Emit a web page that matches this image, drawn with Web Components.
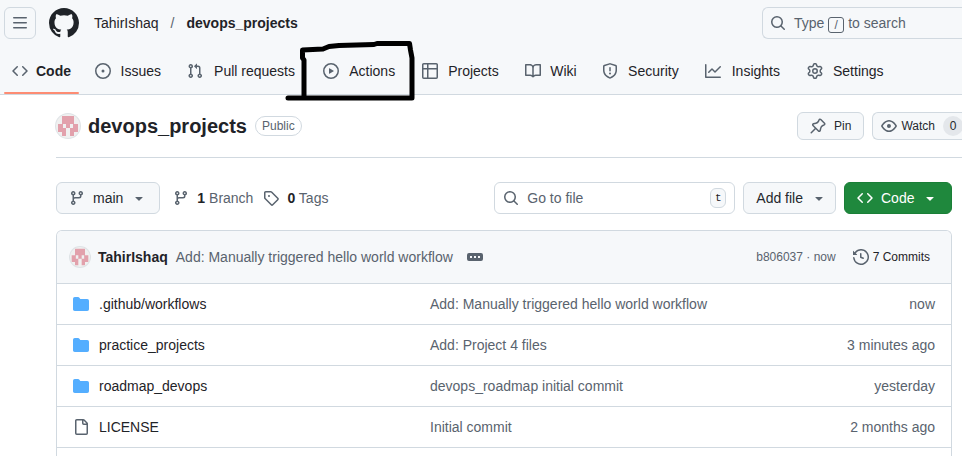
<!DOCTYPE html>
<html lang="en">
<head>
<meta charset="utf-8">
<title>TahirIshaq/devops_projects</title>
<style>
  html { overflow: hidden; }
  body {
    margin: 0;
    background: #fff;
    color: #1f2328;
    font: 14px/20px "Liberation Sans", Arial, sans-serif;
    --muted: #59636e;
    --line: #d1d9e0;
    --subtle: #f6f8fa;
  }
</style>
</head>
<body>
<repo-page></repo-page>
<script>
const base = `
  * { box-sizing: border-box; }
  a { color: inherit; text-decoration: none; }
  button, input { font: inherit; color: inherit; margin: 0; }
  button { cursor: pointer; }
`;

const icons = {
  menu: '<path d="M1 2.75A.75.75 0 0 1 1.75 2h12.5a.75.75 0 0 1 0 1.5H1.75A.75.75 0 0 1 1 2.75Zm0 5A.75.75 0 0 1 1.75 7h12.5a.75.75 0 0 1 0 1.5H1.75A.75.75 0 0 1 1 7.75ZM1.75 12h12.5a.75.75 0 0 1 0 1.5H1.75a.75.75 0 0 1 0-1.5Z"/>',
  github: '<path d="M8 0c4.42 0 8 3.58 8 8a8.013 8.013 0 0 1-5.45 7.59c-.4.08-.55-.17-.55-.38 0-.27.01-1.13.01-2.2 0-.75-.25-1.23-.54-1.48 1.78-.2 3.65-.88 3.65-3.95 0-.88-.31-1.59-.82-2.15.08-.2.36-1.02-.08-2.12 0 0-.67-.22-2.2.82-.64-.18-1.32-.27-2-.27-.68 0-1.36.09-2 .27-1.53-1.03-2.2-.82-2.2-.82-.44 1.1-.16 1.92-.08 2.12-.51.56-.82 1.28-.82 2.15 0 3.06 1.86 3.75 3.64 3.95-.23.2-.44.55-.51 1.07-.46.21-1.61.55-2.33-.66-.15-.24-.6-.83-1.23-.82-.67.01-.27.38.01.53.34.19.73.9.82 1.13.16.45.68 1.31 2.69.94 0 .67.01 1.3.01 1.49 0 .21-.15.45-.55.38A7.995 7.995 0 0 1 0 8c0-4.42 3.58-8 8-8Z"/>',
  code: '<path d="m11.28 3.22 4.25 4.25a.75.75 0 0 1 0 1.06l-4.25 4.25a.749.749 0 0 1-1.275-.326.749.749 0 0 1 .215-.734L13.94 8l-3.72-3.72a.749.749 0 0 1 .326-1.275.749.749 0 0 1 .734.215Zm-6.56 0a.751.751 0 0 1 1.042.018.751.751 0 0 1 .018 1.042L2.06 8l3.72 3.72a.749.749 0 0 1-.326 1.275.749.749 0 0 1-.734-.215L.47 8.53a.75.75 0 0 1 0-1.06Z"/>',
  issue: '<path d="M8 9.5a1.5 1.5 0 1 0 0-3 1.5 1.5 0 0 0 0 3Z"/><path d="M8 0a8 8 0 1 1 0 16A8 8 0 0 1 8 0ZM1.5 8a6.5 6.5 0 1 0 13 0 6.5 6.5 0 0 0-13 0Z"/>',
  pull: '<path d="M1.5 3.25a2.25 2.25 0 1 1 3 2.122v5.256a2.251 2.251 0 1 1-1.5 0V5.372A2.25 2.25 0 0 1 1.5 3.25Zm5.677-.177L9.573.677A.25.25 0 0 1 10 .854V2.5h1A2.5 2.5 0 0 1 13.5 5v5.628a2.251 2.251 0 1 1-1.5 0V5a1 1 0 0 0-1-1h-1v1.646a.25.25 0 0 1-.427.177L7.177 3.427a.25.25 0 0 1 0-.354ZM3.75 2.5a.75.75 0 1 0 0 1.5.75.75 0 0 0 0-1.5Zm0 9.5a.75.75 0 1 0 0 1.5.75.75 0 0 0 0-1.5Zm8.25.75a.75.75 0 1 0 1.5 0 .75.75 0 0 0-1.5 0Z"/>',
  play: '<path d="M8 0a8 8 0 1 1 0 16A8 8 0 0 1 8 0ZM1.5 8a6.5 6.5 0 1 0 13 0 6.5 6.5 0 0 0-13 0Zm4.879-2.773 4.264 2.559a.25.25 0 0 1 0 .428l-4.264 2.559A.25.25 0 0 1 6 10.559V5.442a.25.25 0 0 1 .379-.215Z"/>',
  table: '<path d="M0 1.75C0 .784.784 0 1.75 0h12.5C15.216 0 16 .784 16 1.75v12.5A1.75 1.75 0 0 1 14.25 16H1.75A1.75 1.75 0 0 1 0 14.25ZM6.5 6.5v8h7.75a.25.25 0 0 0 .25-.25V6.5Zm8-1.5V1.75a.25.25 0 0 0-.25-.25H6.5V5Zm-13 1.5v7.75c0 .138.112.25.25.25H5v-8ZM5 5V1.5H1.75a.25.25 0 0 0-.25.25V5Z"/>',
  book: '<path d="M0 1.75A.75.75 0 0 1 .75 1h4.253c1.227 0 2.317.59 3 1.501A3.743 3.743 0 0 1 11.006 1h4.245a.75.75 0 0 1 .75.75v10.5a.75.75 0 0 1-.75.75h-4.507a2.25 2.25 0 0 0-1.591.659l-.622.621a.75.75 0 0 1-1.06 0l-.622-.621A2.25 2.25 0 0 0 5.258 13H.75a.75.75 0 0 1-.75-.75Zm7.251 10.324.004-5.073-.002-2.253A2.25 2.25 0 0 0 5.003 2.5H1.5v9h3.757a3.75 3.75 0 0 1 1.994.574ZM8.755 4.75l-.004 7.322a3.752 3.752 0 0 1 1.992-.572H14.5v-9h-3.495a2.25 2.25 0 0 0-2.25 2.25Z"/>',
  shield: '<path d="M7.467.133a1.748 1.748 0 0 1 1.066 0l5.25 1.68A1.75 1.75 0 0 1 15 3.48V7c0 1.566-.32 3.182-1.303 4.682-.983 1.498-2.585 2.813-5.032 3.855a1.697 1.697 0 0 1-1.33 0c-2.447-1.042-4.049-2.357-5.032-3.855C1.32 10.182 1 8.566 1 7V3.48a1.75 1.75 0 0 1 1.217-1.667Zm.61 1.429a.25.25 0 0 0-.153 0l-5.25 1.68a.25.25 0 0 0-.174.238V7c0 1.358.275 2.666 1.057 3.86.784 1.194 2.121 2.34 4.366 3.297a.196.196 0 0 0 .154 0c2.245-.956 3.582-2.104 4.366-3.298C13.225 9.666 13.5 8.36 13.5 7V3.48a.251.251 0 0 0-.174-.237l-5.25-1.68ZM8.75 4.75v3a.75.75 0 0 1-1.5 0v-3a.75.75 0 0 1 1.5 0ZM9 10.5a1 1 0 1 1-2 0 1 1 0 0 1 2 0Z"/>',
  graph: '<path d="M1.5 1.75V13.5h13.75a.75.75 0 0 1 0 1.5H.75a.75.75 0 0 1-.75-.75V1.75a.75.75 0 0 1 1.5 0Zm14.28 2.53-5.25 5.25a.75.75 0 0 1-1.06 0L7 7.06 4.28 9.78a.751.751 0 0 1-1.042-.018.751.751 0 0 1-.018-1.042l3.25-3.25a.75.75 0 0 1 1.06 0L10 7.94l4.72-4.72a.751.751 0 0 1 1.042.018.751.751 0 0 1 .018 1.042Z"/>',
  gear: '<path d="M8 0a8.2 8.2 0 0 1 .701.031C9.444.095 9.99.645 10.16 1.29l.288 1.107c.018.066.079.158.212.224.231.114.454.243.668.386.123.082.233.09.299.071l1.103-.303c.644-.176 1.392.021 1.82.63.27.385.506.792.704 1.218.315.675.111 1.422-.364 1.891l-.814.806c-.049.048-.098.147-.088.294.016.257.016.515 0 .772-.01.147.038.246.088.294l.814.806c.475.469.679 1.216.364 1.891a7.977 7.977 0 0 1-.704 1.217c-.428.61-1.176.807-1.82.63l-1.102-.302c-.067-.019-.177-.011-.3.071a5.909 5.909 0 0 1-.668.386c-.133.066-.194.158-.211.224l-.29 1.106c-.168.646-.715 1.196-1.458 1.26a8.006 8.006 0 0 1-1.402 0c-.743-.064-1.289-.614-1.458-1.26l-.289-1.106c-.018-.066-.079-.158-.212-.224a5.738 5.738 0 0 1-.668-.386c-.123-.082-.233-.09-.299-.071l-1.103.303c-.644.176-1.392-.021-1.82-.63a8.12 8.12 0 0 1-.704-1.218c-.315-.675-.111-1.422.363-1.891l.815-.806c.05-.048.098-.147.088-.294a6.214 6.214 0 0 1 0-.772c.01-.147-.038-.246-.088-.294l-.815-.806C.635 6.045.431 5.298.746 4.623a7.92 7.92 0 0 1 .704-1.217c.428-.61 1.176-.807 1.82-.63l1.102.302c.067.019.177.011.3-.071.214-.143.437-.272.668-.386.133-.066.194-.158.211-.224l.29-1.106C6.009.645 6.556.095 7.299.03 7.53.01 7.764 0 8 0Zm-.571 1.525c-.036.003-.108.036-.137.146l-.289 1.105c-.147.561-.549.967-.998 1.189-.173.086-.34.183-.5.29-.417.278-.97.423-1.529.27l-1.103-.303c-.109-.03-.175.016-.195.045-.22.312-.412.644-.573.99-.014.031-.021.11.059.19l.815.806c.411.406.562.957.53 1.456a4.709 4.709 0 0 0 0 .582c.032.499-.119 1.05-.53 1.456l-.815.806c-.081.08-.073.159-.059.19.162.346.353.677.573.989.02.03.085.076.195.046l1.102-.303c.56-.153 1.113-.008 1.53.27.161.107.328.204.501.29.447.222.85.629.997 1.189l.289 1.105c.029.109.101.143.137.146a6.6 6.6 0 0 0 1.142 0c.036-.003.108-.036.137-.146l.289-1.105c.147-.561.549-.967.998-1.189.173-.086.34-.183.5-.29.417-.278.97-.423 1.529-.27l1.103.303c.109.029.175-.016.195-.045.22-.313.411-.644.573-.99.014-.031.021-.11-.059-.19l-.815-.806c-.411-.406-.562-.957-.53-1.456a4.709 4.709 0 0 0 0-.582c-.032-.499.119-1.05.53-1.456l.815-.806c.081-.08.073-.159.059-.19a6.464 6.464 0 0 0-.573-.989c-.02-.03-.085-.076-.195-.046l-1.102.303c-.56.153-1.113.008-1.53-.27a4.44 4.44 0 0 0-.501-.29c-.447-.222-.85-.629-.997-1.189l-.289-1.105c-.029-.11-.101-.143-.137-.146a6.6 6.6 0 0 0-1.142 0ZM11 8a3 3 0 1 1-6 0 3 3 0 0 1 6 0ZM9.5 8a1.5 1.5 0 1 0-3.001.001A1.5 1.5 0 0 0 9.5 8Z"/>',
  search: '<path d="M10.68 11.74a6 6 0 0 1-7.922-8.982 6 6 0 0 1 8.982 7.922l3.04 3.04a.749.749 0 0 1-.326 1.275.749.749 0 0 1-.734-.215ZM11.5 7a4.499 4.499 0 1 0-8.997 0A4.499 4.499 0 0 0 11.5 7Z"/>',
  pin: '<path d="m11.294.984 3.722 3.722a1.75 1.75 0 0 1-.504 2.826l-1.327.613a3.089 3.089 0 0 0-1.707 2.084l-.584 2.454c-.317 1.332-1.972 1.8-2.94.832L5.75 11.311 1.78 15.28a.749.749 0 1 1-1.06-1.06l3.969-3.97-2.204-2.204c-.968-.968-.5-2.623.832-2.94l2.454-.584a3.08 3.08 0 0 0 2.084-1.707l.613-1.327a1.75 1.75 0 0 1 2.826-.504ZM6.283 9.723l2.732 2.731a.25.25 0 0 0 .42-.119l.584-2.454a4.586 4.586 0 0 1 2.537-3.098l1.328-.613a.25.25 0 0 0 .072-.404l-3.722-3.722a.25.25 0 0 0-.404.072l-.613 1.328a4.584 4.584 0 0 1-3.098 2.537l-2.454.584a.25.25 0 0 0-.119.42l2.731 2.732Z"/>',
  eye: '<path d="M8 2c1.981 0 3.671.992 4.933 2.078 1.27 1.091 2.187 2.345 2.637 3.023a1.62 1.62 0 0 1 0 1.798c-.45.678-1.367 1.932-2.637 3.023C11.67 13.008 9.981 14 8 14c-1.981 0-3.671-.992-4.933-2.078C1.797 10.83.88 9.576.43 8.898a1.62 1.62 0 0 1 0-1.798c.45-.677 1.367-1.931 2.637-3.022C4.33 2.992 6.019 2 8 2ZM1.679 7.932a.12.12 0 0 0 0 .136c.411.622 1.241 1.75 2.366 2.717C5.176 11.758 6.527 12.5 8 12.5c1.473 0 2.825-.742 3.955-1.715 1.124-.967 1.954-2.096 2.366-2.717a.12.12 0 0 0 0-.136c-.412-.621-1.242-1.75-2.366-2.717C10.824 4.242 9.473 3.5 8 3.5c-1.473 0-2.825.742-3.955 1.715-1.124.967-1.954 2.096-2.366 2.717ZM8 10a2 2 0 1 1-.001-3.999A2 2 0 0 1 8 10Z"/>',
  branch: '<path d="M9.5 3.25a2.25 2.25 0 1 1 3 2.122V6A2.5 2.5 0 0 1 10 8.5H6a1 1 0 0 0-1 1v1.128a2.251 2.251 0 1 1-1.5 0V5.372a2.25 2.25 0 1 1 1.5 0v1.836A2.493 2.493 0 0 1 6 7h4a1 1 0 0 0 1-1v-.628A2.25 2.25 0 0 1 9.5 3.25Zm-6 0a.75.75 0 1 0 1.5 0 .75.75 0 0 0-1.5 0Zm8.25-.75a.75.75 0 1 0 0 1.5.75.75 0 0 0 0-1.5ZM4.25 12a.75.75 0 1 0 0 1.5.75.75 0 0 0 0-1.5Z"/>',
  tag: '<path d="M1 7.775V2.75C1 1.784 1.784 1 2.75 1h5.025c.464 0 .91.184 1.238.513l6.25 6.25a1.75 1.75 0 0 1 0 2.474l-5.026 5.026a1.75 1.75 0 0 1-2.474 0l-6.25-6.25A1.752 1.752 0 0 1 1 7.775Zm1.5 0c0 .066.026.13.073.177l6.25 6.25a.25.25 0 0 0 .354 0l5.025-5.025a.25.25 0 0 0 0-.354l-6.25-6.25a.25.25 0 0 0-.177-.073H2.75a.25.25 0 0 0-.25.25ZM6 5a1 1 0 1 1 0 2 1 1 0 0 1 0-2Z"/>',
  caret: '<path d="m4.427 7.427 3.396 3.396a.25.25 0 0 0 .354 0l3.396-3.396A.25.25 0 0 0 11.396 7H4.604a.25.25 0 0 0-.177.427Z"/>',
  history: '<path d="m.427 1.927 1.215 1.215a8.002 8.002 0 1 1-1.6 5.685.75.75 0 1 1 1.493-.154 6.5 6.5 0 1 0 1.18-4.458l1.358 1.358A.25.25 0 0 1 3.896 6H.25A.25.25 0 0 1 0 5.75V2.104a.25.25 0 0 1 .427-.177ZM7.75 4a.75.75 0 0 1 .75.75v2.992l2.028.812a.75.75 0 0 1-.557 1.392l-2.5-1A.751.751 0 0 1 7 8.25v-3.5A.75.75 0 0 1 7.75 4Z"/>',
  folder: '<path d="M1.75 1A1.75 1.75 0 0 0 0 2.75v10.5C0 14.216.784 15 1.75 15h12.5A1.75 1.75 0 0 0 16 13.25v-8.5A1.75 1.75 0 0 0 14.25 3H7.5a.25.25 0 0 1-.2-.1l-.9-1.2C6.07 1.26 5.55 1 5 1H1.75Z"/>',
  file: '<path d="M2 1.75C2 .784 2.784 0 3.75 0h6.586c.464 0 .909.184 1.237.513l2.914 2.914c.329.328.513.773.513 1.237v9.586A1.75 1.75 0 0 1 13.25 16h-9.5A1.75 1.75 0 0 1 2 14.25Zm1.75-.25a.25.25 0 0 0-.25.25v12.5c0 .138.112.25.25.25h9.5a.25.25 0 0 0 .25-.25V6h-2.75A1.75 1.75 0 0 1 9 4.25V1.5Zm6.75.062V4.25c0 .138.112.25.25.25h2.688l-.011-.013-2.914-2.914-.013-.011Z"/>',
  ellipsis: '<path fill-rule="evenodd" d="M2 4h12a2 2 0 0 1 2 2v4a2 2 0 0 1-2 2H2a2 2 0 0 1-2-2V6a2 2 0 0 1 2-2Zm1 3v2h2V7Zm4 0v2h2V7Zm4 0v2h2V7Z"/>',
};

function define(name, render) {
  customElements.define(name, class extends HTMLElement {
    connectedCallback() {
      if (this.shadowRoot) return;
      const t = document.createElement('template');
      t.innerHTML = render(this);
      this.attachShadow({ mode: 'open' }).append(t.content.cloneNode(true));
    }
  });
}

define('oct-icon', el => `
  <style>
    :host { display: block; flex: none; width: 16px; height: 16px; color: var(--icon, var(--muted)); }
    svg { display: block; width: 100%; height: 100%; fill: currentColor; }
  </style>
  <svg viewBox="0 0 16 16" aria-hidden="true">${icons[el.getAttribute('name')]}</svg>`);

define('user-avatar', () => `
  <style>
    :host { display: block; flex: none; width: 24px; height: 24px; border-radius: 50%; overflow: hidden; background: #f0f0f0; box-shadow: 0 0 0 1px #dfe3e6; }
    svg { display: block; width: 100%; height: 100%; fill: #e2a1ac; }
  </style>
  <svg viewBox="0 0 24 24" role="img" aria-label="TahirIshaq"><path d="M6 2h12v8h4v8h-4v4h-4v-8h-4v8H6v-4H2v-8h4Z"/><path fill="#f0f0f0" d="M7 10h3v4H7Zm7 0h3v4h-3Z"/></svg>`);

define('nav-tab', el => `
  <style>${base}
    :host { display: block; position: relative; }
    a { display: flex; align-items: center; gap: 8px; padding: 5px 8px; height: 30px; }
    .label { display: inline-flex; flex-direction: column; align-items: center; white-space: nowrap; }
    .label::after { content: attr(data-label); height: 0; overflow: hidden; visibility: hidden; font-weight: 700; }
    :host([selected]) .name { font-weight: 700; }
    :host([selected])::after { content: ""; position: absolute; inset: auto 0 -8px 0; height: 2px; border-radius: 6px; background: #fd8c73; }
  </style>
  <a href="#"><oct-icon name="${el.getAttribute('icon')}"></oct-icon>
    <span class="label" data-label="${el.textContent}"><span class="name"><slot></slot></span></span></a>`);

define('ui-button', el => `
  <style>${base}
    :host { display: block; flex: none; }
    button { display: flex; align-items: center; gap: 8px; height: 32px; padding: 0 12px; white-space: nowrap;
      border: 1px solid var(--line); border-radius: 6px; background: var(--subtle); color: #25292e; font-weight: 400; }
    :host([small]) button { height: 28px; font-size: 12px; padding: 0 12px; }
    :host([primary]) button { min-width: 108px; background: #1f883d; border-color: #1a7f37; color: #fff; --icon: #fff; }
    :host([tight]) button { padding-right: 8px; }
    :host([cut]) button { padding: 0 0 0 8px; gap: 4px; border-right: 0; border-radius: 6px 0 0 6px; }
    :host([square]) button { width: 32px; padding: 0; justify-content: center; }
  </style>
  <button type="button" aria-label="${el.getAttribute('label') || el.textContent.trim()}"><slot></slot></button>`);

define('site-header', () => `
  <style>${base}
    :host { display: block; position: relative; background: var(--subtle); border-bottom: 1px solid var(--line); }
    .bar { display: flex; align-items: center; padding: 7px 0 0 4px; }
    .logo { margin: 0 15px 0 13px; --icon: #1f2328; }
    .logo oct-icon { width: 30px; height: 30px; }
    .crumbs { display: flex; align-items: center; gap: 12px; flex: 1; }
    .crumbs .sep { color: var(--muted); }
    .search { display: flex; align-items: center; gap: 8px; width: 200px; height: 32px; padding: 0 7px; white-space: nowrap; text-align: left;
      border: 1px solid var(--line); border-right: 0; border-radius: 6px 0 0 6px; background: none; color: var(--muted); }
    kbd { display: inline-block; width: 16px; height: 16px; font: 12px/14px "Liberation Sans", Arial, sans-serif; text-align: center; border: 1px solid var(--muted); border-radius: 3px; vertical-align: -1px; }
    nav { display: flex; gap: 8px; padding: 17px 4px 8px; }
    .mark { position: absolute; left: 284px; top: 40px; width: 132px; height: 62px; pointer-events: none; }
  </style>
  <div class="bar">
    <ui-button square label="Open menu"><oct-icon name="menu"></oct-icon></ui-button>
    <a class="logo" href="#" aria-label="Homepage"><oct-icon name="github"></oct-icon></a>
    <div class="crumbs"><a href="#">TahirIshaq</a><span class="sep">/</span><a href="#"><b>devops_projects</b></a></div>
    <button type="button" class="search"><oct-icon name="search"></oct-icon><span>Type <kbd>/</kbd> to search</span></button>
  </div>
  <nav aria-label="Repository"><nav-tab icon="code" selected>Code</nav-tab><nav-tab icon="issue">Issues</nav-tab><nav-tab icon="pull">Pull requests</nav-tab><nav-tab icon="play">Actions</nav-tab><nav-tab icon="table">Projects</nav-tab><nav-tab icon="book">Wiki</nav-tab><nav-tab icon="shield">Security</nav-tab><nav-tab icon="graph">Insights</nav-tab><nav-tab icon="gear">Settings</nav-tab></nav>
  <svg class="mark" viewBox="284 40 132 62" fill="none" stroke="#000" stroke-width="5" stroke-linejoin="round" stroke-linecap="round" aria-hidden="true"><path d="M304 98V60L302.500 58V50L323 49L329 46.500L339 45.500L374 44.500L377 43.500H409.500L410.500 50L412 58V98H288"/></svg>`);

define('repo-title', () => `
  <style>${base}
    :host { display: flex; align-items: center; height: 62px; border-bottom: 1px solid var(--line); box-sizing: content-box; }
    h1 { margin: 0 8px; font: 700 20px/30px "Liberation Sans", Arial, sans-serif; }
    .badge { padding: 0 6px; border: 1px solid var(--line); border-radius: 10px; font-size: 12px; line-height: 18px; color: var(--muted); }
    .actions { display: flex; gap: 8px; margin: 0 -1px 0 auto; }
    .count { width: 20px; height: 20px; line-height: 20px; border-radius: 10px; background: #e4e7eb; text-align: center; margin-left: 4px; }
  </style>
  <user-avatar></user-avatar><h1>devops_projects</h1><span class="badge">Public</span>
  <div class="actions"><ui-button small><oct-icon name="pin"></oct-icon>Pin</ui-button><ui-button small cut label="Watch 0"><oct-icon name="eye"></oct-icon>Watch<span class="count">0</span></ui-button></div>`);

define('repo-toolbar', () => `
  <style>${base}
    :host { display: flex; align-items: center; gap: 8px; }
    .meta { display: flex; align-items: center; gap: 8px; color: var(--muted); white-space: nowrap; }
    .meta b { color: #1f2328; }
    .meta:first-of-type { margin-left: 5px; }
    .meta + .meta { margin-left: 2px; }
    label { display: flex; align-items: center; gap: 8px; width: 241px; height: 32px; margin-left: auto; padding: 0 8px; border: 1px solid var(--line); border-radius: 6px; }
    input { flex: 1; min-width: 0; border: 0; padding: 0; outline: 0; background: none; }
    input::placeholder { color: var(--muted); opacity: 1; }
    kbd { width: 16px; height: 20px; font: 11px/18px "Liberation Mono", monospace; text-align: center; border: 1px solid var(--line); border-radius: 6px; background: var(--subtle); }
  </style>
  <ui-button><oct-icon name="branch"></oct-icon>main<oct-icon name="caret"></oct-icon></ui-button>
  <a class="meta" href="#"><oct-icon name="branch"></oct-icon><span><b>1</b> Branch</span></a>
  <a class="meta" href="#"><oct-icon name="tag"></oct-icon><span><b>0</b> Tags</span></a>
  <label><oct-icon name="search"></oct-icon><input type="text" aria-label="Go to file" placeholder="Go to file"><kbd>t</kbd></label>
  <ui-button tight>Add file<oct-icon name="caret"></oct-icon></ui-button>
  <ui-button primary><oct-icon name="code"></oct-icon>Code<oct-icon name="caret"></oct-icon></ui-button>`);

const files = [
  ['folder', '.github/workflows', 'Add: Manually triggered hello world workflow', 'now'],
  ['folder', 'practice_projects', 'Add: Project 4 files', '3 minutes ago'],
  ['folder', 'roadmap_devops', 'devops_roadmap initial commit', 'yesterday'],
  ['file', 'LICENSE', 'Initial commit', '2 months ago'],
];

define('file-list', () => `
  <style>${base}
    :host { display: block; border: 1px solid var(--line); border-bottom: 0; border-radius: 6px 6px 0 0; overflow: hidden; }
    .commit { display: flex; align-items: center; gap: 8px; height: 52px; padding: 0 21px 0 13px; background: var(--subtle); white-space: nowrap; }
    user-avatar { width: 20px; height: 20px; }
    .message, .hash { color: var(--muted); }
    .more { border: 0; padding: 0; background: none; margin-left: 6px; }
    .hash { margin-left: auto; font-size: 12px; }
    .count { display: flex; align-items: center; gap: 4px; margin-left: 9px; font-size: 12px; }
    table { width: 100%; border-collapse: collapse; table-layout: fixed; }
    td { height: 41px; padding: 0; border-top: 1px solid var(--line); color: var(--muted); }
    td:first-child { width: 373px; padding-left: 16px; color: #1f2328; }
    td:last-child { width: 136px; padding-right: 16px; text-align: right; }
    td:first-child a { display: flex; align-items: center; gap: 10px; }
    .folder { --icon: #54aeff; }
    tr:last-child td { border-bottom: 1px solid var(--line); }
    .rest { height: 8px; }
  </style>
  <div class="commit"><user-avatar></user-avatar><a href="#"><b>TahirIshaq</b></a><a class="message" href="#">Add: Manually triggered hello world workflow</a>
    <button class="more" type="button" aria-label="Commit details"><oct-icon name="ellipsis"></oct-icon></button>
    <span class="hash"><a href="#">b806037</a> · now</span><a class="count" href="#"><oct-icon name="history"></oct-icon>7 Commits</a></div>
  <table aria-label="Files"><tbody>${files.map(([i, n, m, t]) => `<tr><td><a href="#" class="${i}"><oct-icon name="${i}"></oct-icon>${n}</a></td><td><a href="#">${m}</a></td><td>${t}</td></tr>`).join('')}</tbody></table>
  <div class="rest"></div>`);

define('repo-page', () => `
  <style>
    :host { display: block; }
    main { padding-left: 56px; }
    .content { padding: 24px 10px 0 0; }
    repo-toolbar { margin-bottom: 16px; }
  </style>
  <site-header></site-header>
  <main><repo-title></repo-title><div class="content"><repo-toolbar></repo-toolbar><file-list></file-list></div></main>`);
</script>
</body>
</html>
